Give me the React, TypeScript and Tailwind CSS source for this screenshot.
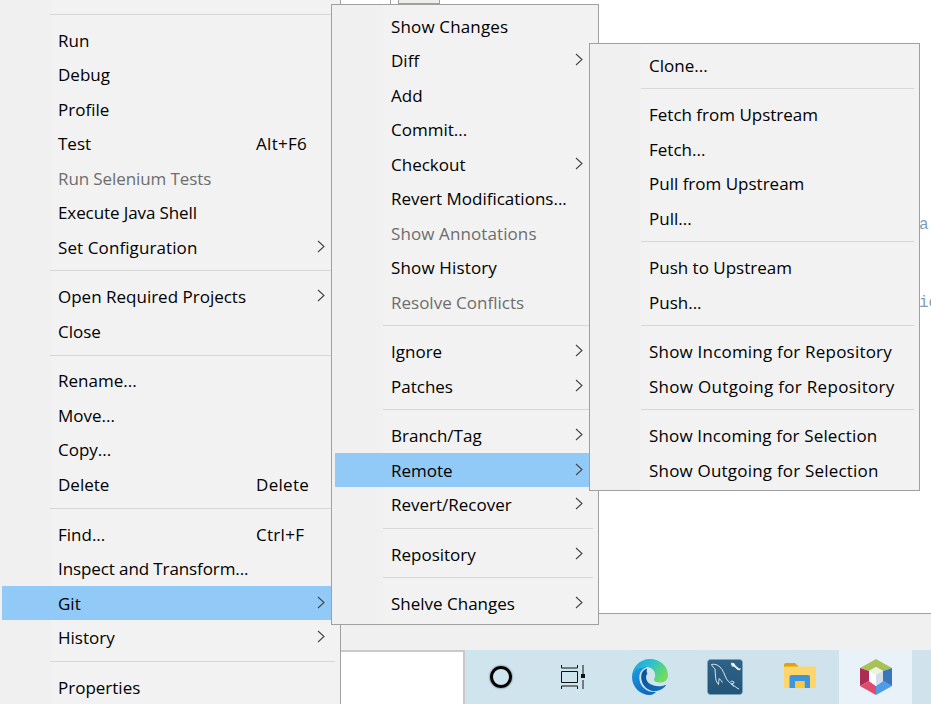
const MENU_BG = 'bg-[linear-gradient(90deg,#f0f0f0_51px,#f2f2f2_51px)]'

type Item = {
  label?: string
  shortcut?: string
  arrow?: boolean
  disabled?: boolean
  active?: boolean
  cls?: string
}

const SEP: Item = {}

const MAIN_MENU: Item[] = [
  SEP,
  { label: 'Run' },
  { label: 'Debug' },
  { label: 'Profile' },
  { label: 'Test', shortcut: 'Alt+F6' },
  { label: 'Run Selenium Tests', disabled: true, cls: 'tracking-[-0.1px]' },
  { label: 'Execute Java Shell', cls: 'tracking-[-0.1px]' },
  { label: 'Set Configuration', arrow: true, cls: 'tracking-[0.1px]' },
  SEP,
  { label: 'Open Required Projects', arrow: true },
  { label: 'Close' },
  SEP,
  { label: 'Rename...' },
  { label: 'Move...' },
  { label: 'Copy...' },
  { label: 'Delete', shortcut: 'Delete' },
  SEP,
  { label: 'Find...', shortcut: 'Ctrl+F' },
  { label: 'Inspect and Transform...', cls: 'tracking-[-0.1px]' },
  { label: 'Git', arrow: true, active: true },
  { label: 'History', arrow: true },
  SEP,
  { label: 'Properties' },
]

const GIT_MENU: Item[] = [
  { label: 'Show Changes', cls: 'tracking-[0.15px]' },
  { label: 'Diff', arrow: true },
  { label: 'Add' },
  { label: 'Commit...' },
  { label: 'Checkout', arrow: true },
  { label: 'Revert Modifications...' },
  { label: 'Show Annotations', disabled: true, cls: 'tracking-[0.1px]' },
  { label: 'Show History', cls: 'tracking-[0.15px]' },
  { label: 'Resolve Conflicts', disabled: true },
  SEP,
  { label: 'Ignore', arrow: true },
  { label: 'Patches', arrow: true },
  SEP,
  { label: 'Branch/Tag', arrow: true },
  { label: 'Remote', arrow: true, active: true },
  { label: 'Revert/Recover', arrow: true },
  SEP,
  { label: 'Repository', arrow: true },
  SEP,
  { label: 'Shelve Changes', arrow: true },
]

const REMOTE_MENU: Item[] = [
  { label: 'Clone...' },
  SEP,
  { label: 'Fetch from Upstream' },
  { label: 'Fetch...' },
  { label: 'Pull from Upstream' },
  { label: 'Pull...' },
  SEP,
  { label: 'Push to Upstream' },
  { label: 'Push...' },
  SEP,
  { label: 'Show Incoming for Repository', cls: 'tracking-[0.2px]' },
  { label: 'Show Outgoing for Repository', cls: 'tracking-[0.3px]' },
  SEP,
  { label: 'Show Incoming for Selection', cls: 'tracking-[0.15px]' },
  { label: 'Show Outgoing for Selection', cls: 'tracking-[0.2px]' },
]

function Chevron() {
  return (
    <svg width="8" height="13" viewBox="0 0 8 13" fill="none" className="ml-auto -mt-[2px] shrink-0">
      <path d="M1 1 7 6.500 1 12" stroke="#444" strokeWidth="1.100" />
    </svg>
  )
}

function MenuRows({ items, sepClass = 'h-[15px]' }: { items: Item[]; sepClass?: string }) {
  return (
    <>
      {items.map((item, i) =>
        item.label ? (
          <div
            key={i}
            className={`flex h-[34.5px] items-center pl-[56px] pr-[11px] ${item.active ? 'bg-[#91c9f7]' : ''} ${item.disabled ? 'text-[#6d6d6d]' : 'text-[#000]'}`}
          >
            <span className={`whitespace-nowrap ${item.shortcut ? 'w-[198px] shrink-0' : ''} ${item.cls ?? ''}`}>{item.label}</span>
            {item.shortcut && <span className="whitespace-nowrap tracking-[0.3px]">{item.shortcut}</span>}
            {item.arrow && <Chevron />}
          </div>
        ) : (
          <div key={i} className={`${sepClass} pt-[6px]`}>
            <div className="ml-[48px] mr-[1px] h-[1px] bg-[#d7d7d7]" />
          </div>
        ),
      )}
    </>
  )
}

function EdgeIcon() {
  return (
    <svg width="36" height="36" viewBox="0 0 36 36">
      <defs>
        <linearGradient id="edgeTop" x1="0" y1="0" x2="1" y2="0.5">
          <stop offset="0" stopColor="#1b9de2" />
          <stop offset="0.5" stopColor="#2cc0d0" />
          <stop offset="1" stopColor="#6fdc5e" />
        </linearGradient>
        <linearGradient id="edgeLeft" x1="0" y1="0" x2="0.4" y2="1">
          <stop offset="0" stopColor="#1d9ee3" />
          <stop offset="1" stopColor="#0f6cc0" />
        </linearGradient>
        <linearGradient id="edgeWave" x1="0" y1="0" x2="1" y2="1">
          <stop offset="0" stopColor="#0a4d94" />
          <stop offset="1" stopColor="#1471bd" />
        </linearGradient>
      </defs>
      <path
        d="M0 18C0 8 8 0 18 0c10 0 18 7 18 16 0 5-3.500 7.500-8 7.500-3.500 0-6-1.200-6-3 0-1 1.200-1.800 1.200-4C23.200 11.500 19 8 15 8 7 8 0 12 0 18Z"
        fill="url(#edgeTop)"
      />
      <path
        d="M0 18C0 11 7 7.500 15 8 9 10 6.500 15 7.500 21c1.200 7 8 13 16.500 12-2 2-4 3-6 3C8 36 0 28 0 18Z"
        fill="url(#edgeLeft)"
      />
      <path
        d="M15 9.500C10 11 8.500 16 9.500 21c1.300 7 8 12 15 11 4-.6 7.500-3 9.500-5.500-.3-.6-.8-.5-1.500-.2-3.500 1.500-11 1.500-15.500-2C14 21.500 13 17 15.500 14.500 14 13 15 11 15 9.500Z"
        fill="url(#edgeWave)"
      />
    </svg>
  )
}

function MysqlIcon() {
  return (
    <svg width="36" height="36" viewBox="0 0 36 36">
      <defs>
        <linearGradient id="mysqlBg" x1="0" y1="0" x2="0" y2="1">
          <stop offset="0" stopColor="#2f6288" />
          <stop offset="1" stopColor="#225678" />
        </linearGradient>
      </defs>
      <rect x="0.500" y="0.500" width="35" height="35" rx="3" fill="url(#mysqlBg)" stroke="#7ea3bb" strokeWidth="0.700" />
      <path
        d="M4.500 5.500c3-.8 6 .2 8.500 2.500 3.500 3.500 4.500 8 6.500 12 2 3 5 5 7.500 7.500M4.500 5.500C5 7.500 7 8.500 8 10c.3 3 .3 7 .8 10 .4 2.500 1.500 4 2.700 5.500.2-2 .3-4 .7-6 1 1 2.300 2.500 3.300 4M23.500 22.500c2-.8 4 0 3.500 1.500l-2.500.8 5.500 4.200 2 1"
        fill="none"
        stroke="#e8f0f5"
        strokeWidth="0.900"
      />
      <path d="M24.500 3.500l3 1 1 2 3.500 3 1.800-.2-.8 2-2.300-.2-3.500-3.300-2.200-.3-1-2.500Z" fill="#f2f6f8" />
    </svg>
  )
}

function FolderIcon() {
  return (
    <svg width="32" height="27" viewBox="0 0 32 30" preserveAspectRatio="none" className="-mt-[3px]">
      <path d="M0 3a2 2 0 0 1 2-2h9l4 4.500H0Z" fill="#e0a208" />
      <rect x="0" y="5" width="32" height="24" rx="1.500" fill="#fdd56a" />
      <path d="M5.500 29V16.500a2 2 0 0 1 2-2h16.500a2 2 0 0 1 2 2V29h-5.500v-7.500H11V29Z" fill="#3f95dd" />
      <rect x="11" y="21.500" width="9.500" height="7.500" fill="#fbc93e" />
    </svg>
  )
}

function NetbeansIcon() {
  return (
    <svg width="32" height="36" viewBox="0 0 32 36">
      <polygon points="0,9 16,0 32,9 23,12 16,8 9,12" fill="#a9c255" />
      <polygon points="0,9 9,12 9,22 0,27" fill="#ad2c52" />
      <polygon points="0,27 9,22 16,27 16,36" fill="#e04a6c" />
      <polygon points="32,27 23,22 16,27 16,36" fill="#4d9ce8" />
      <polygon points="32,9 23,12 23,22 32,27" fill="#3a76bd" />
      <polygon points="9,12 16,8 23,12 16,16" fill="#eef3e1" />
      <polygon points="9,12 16,16 16,27 9,22" fill="#ffffff" />
      <polygon points="23,12 16,16 16,27 23,22" fill="#d3dde7" />
    </svg>
  )
}

export default function App() {
  return (
    <div className="relative flex h-[704px] w-[931px] overflow-hidden bg-white font-['Open_Sans',sans-serif] text-[17px] leading-none">
      {/* Main context menu */}
      <div className={`h-full w-[341px] shrink-0 border-r border-[#a0a0a0] pl-[2px] pr-[4px] pt-[7.9px] ${MENU_BG}`}>
        <MenuRows items={MAIN_MENU} sepClass="h-[15.1px]" />
      </div>

      {/* Window behind the menus */}
      <div className="flex min-w-0 flex-1 flex-col">
        <div className="flex-1 overflow-hidden">
          <div className="flex h-[4px]">
            <div className="ml-[49px] w-[1px] bg-[#a0a0a0]" />
            <div className="ml-[7px] w-[42px] border-x border-b border-[#a0a0a0] bg-[#efefe9]" />
          </div>
          <div className="whitespace-nowrap pl-[578px] pt-[211px] font-['Liberation_Mono',monospace] text-[16px] leading-[20px] text-[#7f9db9]">
            <p className="h-[55px]">a:</p>
            <p className="h-[23px] text-[#204080]">&nbsp;.</p>
            <p>ic</p>
          </div>
        </div>
        <div className="h-[37px] shrink-0 border-t border-[#a0a0a0] bg-[#f0f0f0]" />
        <div className="flex h-[54px] shrink-0">
          <div className="w-[124px] border-r-2 border-t-2 border-[#c9c9c9] bg-white" />
          <div className="flex flex-1 items-center bg-[linear-gradient(90deg,#cfe5ee,#d0e2ec)]">
            <div className="flex h-full w-[72px] items-center justify-center">
              <div className="h-[22px] w-[22px] rounded-full border-[3px] border-black shadow-[0_0_2px_#333]" />
            </div>
            <div className="flex h-full w-[72px] items-center justify-center">
              <svg width="24" height="24" viewBox="0 0 24 24" fill="none" stroke="#111" strokeWidth="1">
                <path d="M.5 0v3h16V0M.5 24v-3h16v3M.5 6.500h16v11H.5Z M22 0v9 M22 15v9" />
                <rect x="20" y="9" width="4" height="4" fill="#111" stroke="none" />
              </svg>
            </div>
            <div className="flex h-full w-[82px] items-center justify-center">
              <EdgeIcon />
            </div>
            <div className="flex h-full w-[68px] items-center justify-center">
              <MysqlIcon />
            </div>
            <div className="flex h-full w-[80px] items-center justify-center pl-[2px]">
              <FolderIcon />
            </div>
            <div className="flex h-full w-[73px] items-center justify-center bg-[#e8f2f8]">
              <NetbeansIcon />
            </div>
          </div>
        </div>
      </div>

      {/* Git submenu */}
      <div className={`absolute left-[331px] top-[4px] h-[621px] w-[268px] border border-[#a0a0a0] pl-[3px] pr-[4px] pt-[3.75px] ${MENU_BG}`}>
        <MenuRows items={GIT_MENU} />
      </div>

      {/* Remote submenu */}
      <div className={`absolute left-[589px] top-[43px] h-[448px] w-[331px] border border-[#a0a0a0] pl-[3px] pr-[4px] pt-[3.75px] ${MENU_BG}`}>
        <MenuRows items={REMOTE_MENU} />
      </div>
    </div>
  )
}
